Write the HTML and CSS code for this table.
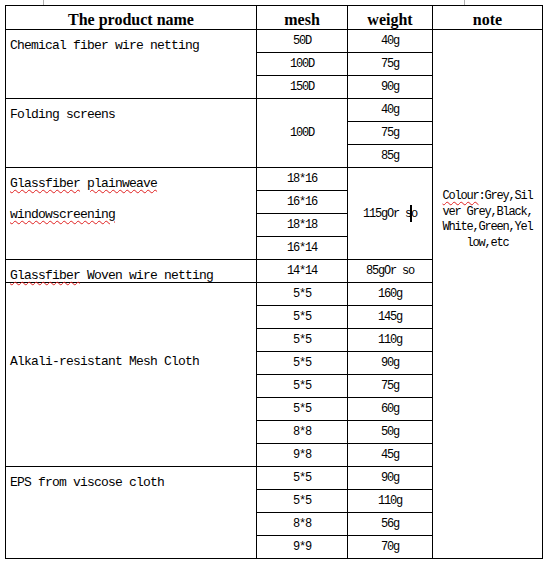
FILE: index.html
```html
<!DOCTYPE html>
<html>
<head>
<meta charset="utf-8">
<link rel="stylesheet" href="styles.css">
</head>
<body>
<div class="ruler-mark m1"></div>
<div class="ruler-mark m2"></div>
<table class="spec">
  <colgroup>
    <col class="c-name"><col class="c-mesh"><col class="c-weight"><col class="c-note">
  </colgroup>
  <tr class="head">
    <th>The product name</th><th>mesh</th><th>weight</th><th>note</th>
  </tr>
  <tr>
    <td class="name" rowspan="3"><div class="nm">Chemical fiber wire netting</div></td>
    <td class="num">50D</td><td class="num">40g</td>
    <td class="note" rowspan="23"><div class="note-text"><span class="spell">Colour</span>:Grey,Sil<br>ver Grey,Black,<br>White,Green,Yel<br>low,etc</div></td>
  </tr>
  <tr><td class="num">100D</td><td class="num">75g</td></tr>
  <tr><td class="num">150D</td><td class="num">90g</td></tr>

  <tr>
    <td class="name" rowspan="3"><div class="nm">Folding screens</div></td>
    <td class="num" rowspan="3">100D</td><td class="num">40g</td>
  </tr>
  <tr><td class="num">75g</td></tr>
  <tr><td class="num">85g</td></tr>

  <tr>
    <td class="name" rowspan="4"><div class="nm"><span class="spell">Glassfiber</span> <span class="spell">plainweave</span><br><span class="spell">windowscreening</span></div></td>
    <td class="num">18*16</td>
    <td class="num" rowspan="4">115gOr s<span class="caret"></span>o</td>
  </tr>
  <tr><td class="num">16*16</td></tr>
  <tr><td class="num">18*18</td></tr>
  <tr><td class="num">16*14</td></tr>

  <tr>
    <td class="name"><div class="nm short"><span class="spell">Glassfiber</span> Woven wire netting</div></td>
    <td class="num">14*14</td><td class="num">85gOr so</td>
  </tr>

  <tr>
    <td class="name mid" rowspan="8"><div class="nm">Alkali-resistant Mesh Cloth</div></td>
    <td class="num">5*5</td><td class="num">160g</td>
  </tr>
  <tr><td class="num">5*5</td><td class="num">145g</td></tr>
  <tr><td class="num">5*5</td><td class="num">110g</td></tr>
  <tr><td class="num">5*5</td><td class="num">90g</td></tr>
  <tr><td class="num">5*5</td><td class="num">75g</td></tr>
  <tr><td class="num">5*5</td><td class="num">60g</td></tr>
  <tr><td class="num">8*8</td><td class="num">50g</td></tr>
  <tr><td class="num">9*8</td><td class="num">45g</td></tr>

  <tr>
    <td class="name" rowspan="4"><div class="nm">EPS from viscose cloth</div></td>
    <td class="num">5*5</td><td class="num">90g</td>
  </tr>
  <tr><td class="num">5*5</td><td class="num">110g</td></tr>
  <tr><td class="num">8*8</td><td class="num">56g</td></tr>
  <tr><td class="num">9*9</td><td class="num">70g</td></tr>
</table>
</body>
</html>
```
FILE: styles.css
```css
html, body {
  margin: 0;
  padding: 0;
  background: #fff;
}
body {
  position: relative;
  width: 546px;
  height: 562px;
  overflow: hidden;
  font-family: "Liberation Mono", monospace;
  color: #000;
}
.ruler-mark {
  position: absolute;
  top: 0;
  width: 1px;
  height: 5px;
  background: #b0b0b0;
}
.ruler-mark.m1 { left: 43px; }
.ruler-mark.m2 { left: 464px; }

.spec {
  border-collapse: collapse;
  table-layout: fixed;
  width: 537px;
  margin: 5px 0 0 5px;
}
.c-name { width: 251px; }
.c-mesh { width: 91px; }
.c-weight { width: 85px; }
.c-note { width: 110px; }

.spec th, .spec td {
  border: 1px solid #000;
  padding: 0;
  height: 22px;
}
.spec .head th {
  font-family: "Liberation Serif", serif;
  font-weight: bold;
  font-size: 16px;
  line-height: 16px;
  vertical-align: bottom;
  text-align: center;
  padding-bottom: 1px;
}
.spec td.name {
  vertical-align: top;
  text-align: left;
  padding-left: 4px;
}
.nm {
  font-size: 13px;
  letter-spacing: -0.8px;
  line-height: 31px;
  white-space: nowrap;
}
.nm.short {
  height: 22px;
}
.spec td.name.mid {
  padding-top: 63px;
}
.spec td.num {
  text-align: center;
  vertical-align: middle;
  font-size: 12px;
  letter-spacing: -1.2px;
  line-height: 14px;
  white-space: nowrap;
}
.spec td.note {
  vertical-align: top;
  text-align: center;
  padding-top: 159px;
}
.note-text {
  font-size: 12px;
  letter-spacing: -1.2px;
  line-height: 15.7px;
  white-space: nowrap;
}
.spell {
  text-decoration: underline wavy #e02020;
  text-decoration-thickness: 1px;
  text-underline-offset: 2px;
}
.caret {
  display: inline-block;
  width: 2px;
  height: 17px;
  background: #000;
  margin: 0 -1px 0 -1px;
  vertical-align: middle;
}
```
